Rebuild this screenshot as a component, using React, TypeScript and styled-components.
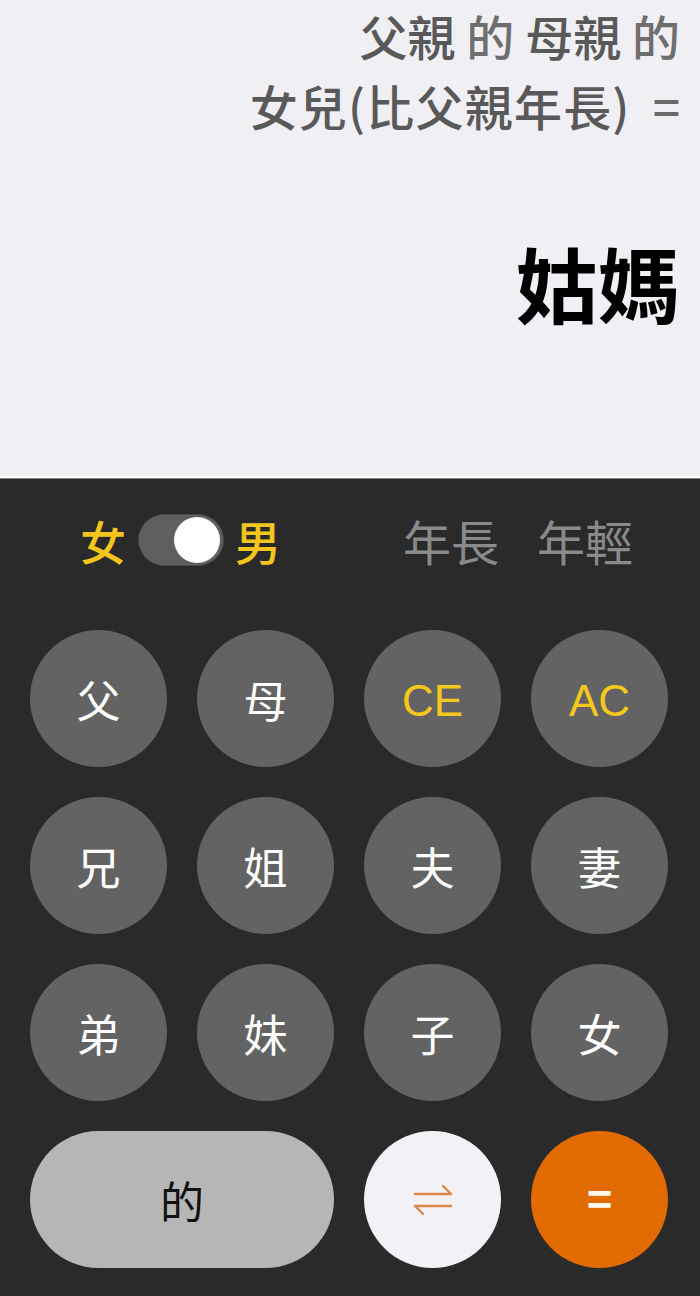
import React from "react";
import styled, { createGlobalStyle } from "styled-components";

const Global = createGlobalStyle`
  html, body { margin: 0; padding: 0; background: #2a2a2a; }
  body { font-family: "Noto Sans CJK TC", "Noto Sans", sans-serif; }
  * { box-sizing: border-box; }
`;

const Page = styled.div`
  width: 700px;
  height: 1296px;
  display: flex;
  flex-direction: column;
  overflow: hidden;
`;

const Display = styled.div`
  height: 478px;
  background: #f0eff4;
  border-bottom: 2px solid #ffffff;
  display: flex;
  flex-direction: column;
  align-items: flex-end;
  padding: 0 20px 0 0;
`;

const Expression = styled.div`
  font-size: 48px;
  line-height: 70px;
  color: #595959;
  text-align: right;
  font-weight: 500;
`;

const Line = styled.div<{ $spacing?: number }>`
  letter-spacing: ${(p) => p.$spacing || 0}px;
`;

const Of = styled.span`
  color: #6e6e6e;
`;

const Eq = styled.span`
  margin-left: 22px;
  letter-spacing: 0;
  color: #6a6a6a;
`;

const Result = styled.div`
  margin-top: 92px;
  font-size: 82px;
  line-height: 100px;
  font-weight: 700;
  color: #000;
`;

const Keypad = styled.div`
  flex: 1;
  background: #2a2a2a;
  border-top: 1px solid #8a8a8a;
  display: flex;
  flex-direction: column;
  padding: 0 31px 0 30px;
`;

const OptionRow = styled.div`
  height: 151px;
  display: flex;
  align-items: center;
  padding: 0 36px 30px 50px;
`;

const Gender = styled.span`
  font-size: 46px;
  font-weight: 500;
  color: #f4c51c;
  line-height: 1;
`;

const Switch = styled.div`
  width: 86px;
  height: 52px;
  border-radius: 26px;
  background: #5f5f5f;
  border: 1px solid #4a4a4a;
  margin: 0 11px 0 12px;
  display: flex;
  align-items: center;
  justify-content: flex-end;
  padding: 0 3px;
`;

const Knob = styled.div`
  width: 46px;
  height: 46px;
  border-radius: 50%;
  background: #fff;
`;

const AgeGroup = styled.div`
  margin-left: auto;
  display: flex;
  gap: 38px;
`;

const Age = styled.span`
  font-size: 48px;
  color: #8a8a8a;
  line-height: 1;
`;

const Grid = styled.div`
  display: grid;
  grid-template-columns: repeat(4, 137px);
  grid-auto-rows: 137px;
  column-gap: 30px;
  row-gap: 30px;
`;

type Variant = "gray" | "light" | "white" | "orange";

const bg: Record<Variant, string> = {
  gray: "#636363",
  light: "#b6b6b6",
  white: "#f2f1f6",
  orange: "#e26b00",
};

const fg: Record<Variant, string> = {
  gray: "#ffffff",
  light: "#111111",
  white: "#d9884a",
  orange: "#ffffff",
};

const Key = styled.button<{ $v?: Variant; $accent?: boolean; $span?: number }>`
  border: none;
  margin: 0;
  padding: 0;
  border-radius: 69px;
  background: ${(p) => bg[p.$v || "gray"]};
  color: ${(p) => (p.$accent ? "#f6c81c" : fg[p.$v || "gray"])};
  grid-column: span ${(p) => p.$span || 1};
  font-family: "Noto Sans CJK TC", "Noto Sans", sans-serif;
  font-size: 44px;
  line-height: 1;
  display: flex;
  align-items: center;
  justify-content: center;
`;

const Latin = styled.span`
  font-family: "Liberation Sans", "Noto Sans", sans-serif;
  font-size: 44px;
  padding-top: 4px;
`;

const EqSign = styled.span`
  font-family: "Liberation Sans", sans-serif;
  font-weight: 700;
  font-size: 44px;
  color: #fff8ec;
`;

const SwapIcon = () => (
  <svg width="44" height="38" viewBox="0 0 44 38" fill="none" stroke="#d9884a" strokeWidth="2.4" strokeLinecap="round" strokeLinejoin="round">
    <path d="M4 13 H40 M32 5 L40 13" />
    <path d="M40 25 H4 M12 33 L4 25" />
  </svg>
);

export default function App() {
  const chars = ["兄", "姐", "夫", "妻", "弟", "妹", "子", "女"];
  return (
    <Page>
      <Global />
      <Display>
        <Expression>
          <Line>
            父親 <Of>的</Of> 母親 <Of>的</Of>
          </Line>
          <Line $spacing={1.2}>
            女兒(比父親年長)<Eq>=</Eq>
          </Line>
        </Expression>
        <Result>姑媽</Result>
      </Display>
      <Keypad>
        <OptionRow>
          <Gender>女</Gender>
          <Switch>
            <Knob />
          </Switch>
          <Gender>男</Gender>
          <AgeGroup>
            <Age>年長</Age>
            <Age>年輕</Age>
          </AgeGroup>
        </OptionRow>
        <Grid>
          <Key>父</Key>
          <Key>母</Key>
          <Key $accent>
            <Latin>CE</Latin>
          </Key>
          <Key $accent>
            <Latin>AC</Latin>
          </Key>
          {chars.map((c, i) => (
            <Key key={i}>{c}</Key>
          ))}
          <Key $v="light" $span={2}>的</Key>
          <Key $v="white">
            <SwapIcon />
          </Key>
          <Key $v="orange">
            <EqSign>=</EqSign>
          </Key>
        </Grid>
      </Keypad>
    </Page>
  );
}
